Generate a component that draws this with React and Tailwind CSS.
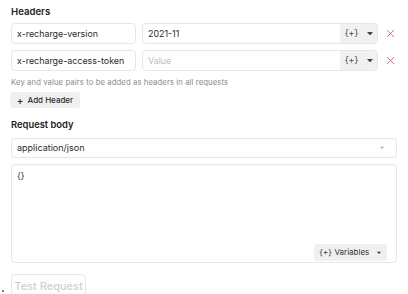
import React from "react";

function Caret({ className = "" }) {
  return (
    <svg width="6" height="3.5" viewBox="0 0 7 4" className={className}>
      <path d="M0 0 L7 0 L3.5 4 Z" fill="currentColor" />
    </svg>
  );
}

function XIcon() {
  return (
    <svg width="9" height="9" viewBox="0 0 10 10">
      <path d="M1.5 1.5 L8.5 8.5 M8.5 1.5 L1.5 8.5" stroke="#c8627a" strokeWidth="1" strokeLinecap="round" />
    </svg>
  );
}

function HeaderRow({ k, v, placeholder }) {
  return (
    <div className="flex items-center h-[21px]">
      <div className="w-[125px] h-full border border-[#e6e6e6] rounded-[4px] flex items-center px-[5px] text-[8.9px] text-[#2b2b2b] whitespace-nowrap">
        {k}
      </div>
      <div className="ml-[6px] w-[236px] h-full border border-[#e6e6e6] rounded-[4px] flex items-stretch overflow-hidden">
        <div className={`flex-1 flex items-center px-[5px] text-[8.9px] ${v ? "text-[#2b2b2b]" : "text-[#bdbdbd]"}`}>
          {v || placeholder}
        </div>
        <div className="w-[37px] bg-[#f1f1f1] flex items-center justify-center gap-[8px] text-[#444]">
          <span className="text-[8px] font-['DejaVu_Sans_Mono',monospace] leading-none">{"{+}"}</span>
          <Caret />
        </div>
      </div>
      <div className="flex-1 flex items-center justify-center pl-[5px]">
        <XIcon />
      </div>
    </div>
  );
}

export default function App() {
  return (
    <div className="w-[408px] h-[294px] bg-white overflow-hidden relative font-['Inter',sans-serif] px-[11px]">
      <div className="pt-[4px] text-[9.6px] font-semibold text-[#222] leading-[15px]">Headers</div>
      <div className="mt-[4px] flex flex-col gap-[6px]">
        <HeaderRow k="x-recharge-version" v="2021-11" />
        <HeaderRow k="x-recharge-access-token" placeholder="Value" />
      </div>
      <div className="mt-[6px] text-[7.7px] text-[#8a8a8a] leading-[11px] tracking-[0.1px]">
        Key and value pairs to be added as headers in all requests
      </div>
      <div className="mt-[4px] -ml-[1px] w-[70px] h-[16px] bg-[#f0f0f0] rounded-[3px] flex items-center justify-center gap-[4px] text-[8px] text-[#2b2b2b] font-medium">
        <span className="text-[10px] leading-none -mt-[1px]">+</span>
        <span>Add Header</span>
      </div>
      <div className="mt-[10px] text-[9.4px] font-semibold text-[#222] leading-[14px]">Request body</div>
      <div className="mt-[6px] h-[20px] border border-[#e6e6e6] rounded-[4px] flex items-center justify-between pl-[5px] pr-[11px] text-[9px] text-[#2b2b2b]">
        <span>application/json</span>
        <Caret className="text-[#aaa] scale-75" />
      </div>
      <div className="mt-[6px] h-[99px] border border-[#e6e6e6] rounded-[4px] relative px-[5px] pt-[5px]">
        <div className="text-[9px] text-[#333] leading-[12px]">{"{}"}</div>
        <div className="absolute right-[9px] bottom-[1px] w-[73px] h-[17px] bg-[#f0f0f0] rounded-[3px] flex items-center justify-center gap-[7px] text-[#333]">
          <span className="text-[8px] leading-none">
            <span className="font-['DejaVu_Sans_Mono',monospace] text-[7.5px]">{"{+}"}</span> Variables
          </span>
          <Caret className="scale-75" />
        </div>
      </div>
      <div className="mt-[11px] w-[75px] h-[22px] border border-[#e6e6e6] rounded-[4px] flex items-start pt-[3px] justify-center text-[11px] text-[#cfcfcf] font-medium">
        Test Request
      </div>
      <div className="absolute left-[2px] top-[290px] w-[2px] h-[2px] bg-[#555] rounded-full" />
    </div>
  );
}
